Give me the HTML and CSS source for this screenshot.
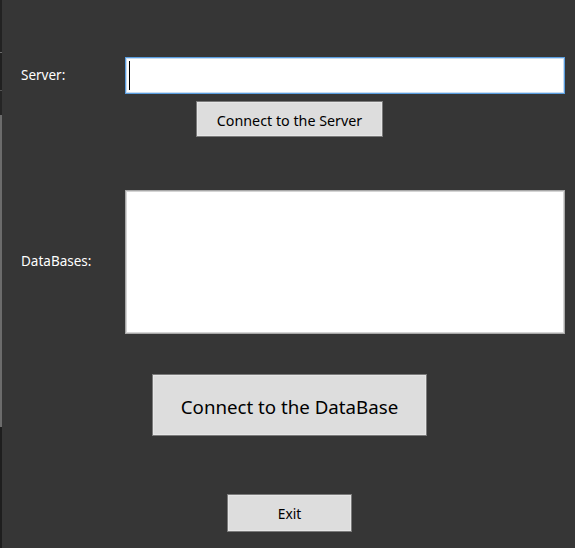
FILE: index.html
```html
<!DOCTYPE html>
<html>
<head>
<meta charset="utf-8">
<link rel="stylesheet" href="styles.css">
</head>
<body>
<div class="window">
  <div class="edge">
    <div class="seg seg-a"></div>
    <div class="seg seg-line"></div>
    <div class="seg seg-b"></div>
    <div class="seg seg-line2"></div>
    <div class="seg seg-c"></div>
    <div class="seg seg-gray"></div>
    <div class="seg seg-d"></div>
  </div>
  <div class="main">
    <div class="row row-server">
      <label class="label">Server:</label>
      <div class="textbox"><span class="caret"></span></div>
    </div>
    <div class="btn-row btn-row-server">
      <button class="btn btn-server">Connect to the Server</button>
    </div>
    <div class="row row-db">
      <label class="label">DataBases:</label>
      <div class="listbox"></div>
    </div>
    <div class="btn-row btn-row-db">
      <button class="btn btn-db">Connect to the DataBase</button>
    </div>
    <div class="btn-row btn-row-exit">
      <button class="btn btn-exit">Exit</button>
    </div>
  </div>
</div>
</body>
</html>
```

FILE: styles.css
```css
html, body {
  margin: 0;
  padding: 0;
  height: 100%;
}
body {
  background: #363636;
  font-family: "Segoe UI", "Noto Sans", "Open Sans", sans-serif;
  overflow: hidden;
}
.window {
  display: flex;
  height: 548px;
}
.edge {
  width: 2px;
  display: flex;
  flex-direction: column;
}
.seg-a { height: 52px; background: #222222; }
.seg-line { height: 1px; background: #6a6a6a; }
.seg-b { height: 37px; background: #202020; }
.seg-line2 { height: 1px; background: #555555; }
.seg-c { height: 24px; background: #252525; }
.seg-gray { height: 312px; background: #6c6c6c; }
.seg-d { flex: 1; background: #1e1e1e; }

.main {
  flex: 1;
  display: flex;
  flex-direction: column;
}
.row {
  display: flex;
  align-items: center;
}
.label {
  width: 104px;
  padding-left: 19px;
  color: #ffffff;
  font-size: 13.5px;
}
.row-server {
  margin-top: 57px;
}
.row-server .label {
  padding-bottom: 2px;
}
.textbox {
  box-sizing: border-box;
  width: 440px;
  height: 37px;
  background: #ffffff;
  border: 1px solid #5a9ee0;
  box-shadow: inset 0 0 0 1px #c8ddf2;
  position: relative;
}
.caret {
  position: absolute;
  left: 3px;
  top: 3px;
  width: 1px;
  height: 29px;
  background: #000000;
}
.btn-row {
  display: flex;
}
.btn {
  box-sizing: border-box;
  background: #dddddd;
  border: 1px solid #7a7a7a;
  box-shadow: inset 0 0 0 1px #e6e6e6;
  color: #000000;
  font-family: "Segoe UI", "Noto Sans", "Open Sans", sans-serif;
  padding: 0;
  margin: 0;
}
.btn-row-server {
  margin-top: 7px;
  padding-left: 194px;
}
.btn-server {
  width: 187px;
  height: 36px;
  font-size: 14.3px;
  padding-top: 3px;
}
.row-db {
  margin-top: 53px;
}
.row-db .label {
  padding-bottom: 2px;
}
.listbox {
  box-sizing: border-box;
  width: 440px;
  height: 144px;
  background: #ffffff;
  border: 1px solid #a8a8a8;
  box-shadow: inset 0 0 0 1px #d4d4d4;
}
.btn-row-db {
  margin-top: 40px;
  padding-left: 150px;
}
.btn-db {
  width: 275px;
  height: 62px;
  font-size: 18.7px;
  padding-top: 3px;
}
.btn-row-exit {
  margin-top: 58px;
  padding-left: 225px;
}
.btn-exit {
  width: 125px;
  height: 38px;
  font-size: 13.8px;
  padding-top: 1px;
}
```
